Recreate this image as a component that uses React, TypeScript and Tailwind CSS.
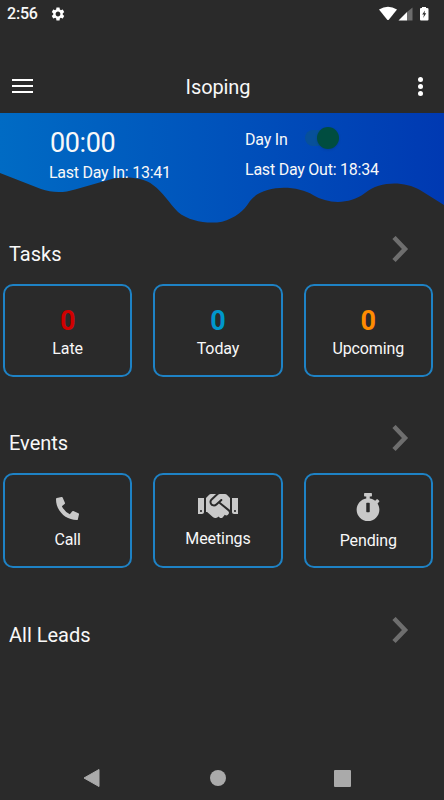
import { type ReactNode } from 'react';
import { MdSettings } from 'react-icons/md';
import { FaHandshake, FaPhoneAlt, FaStopwatch } from 'react-icons/fa';

const Wave = () => (
  <svg className="block h-[111px] w-[444px]" viewBox="0 0 444 111" aria-hidden="true">
    <defs>
      <linearGradient id="sea" x1="0" y1="0" x2="1" y2="0">
        <stop offset="0" stopColor="#006bc4" />
        <stop offset="1" stopColor="#0039b2" />
      </linearGradient>
    </defs>
    <path
      fill="url(#sea)"
      d="M0 0H444V92L420 77C404 68 380 68 365 80C349 92 328 91 313 82C297 72 263 71 250 88C244 98 235 105 222 108.700C209 111 190 109 178 99C169 90 163 79 153 72C143 64 123 63 110 66.500L75 76.500C64 80 52 80 41 76L0 60Z"
    />
  </svg>
);

const Chevron = () => (
  <svg className="h-[27px] w-[17px]" viewBox="0 0 17 27" aria-hidden="true">
    <path d="M2 1.500L13 13L2 24.500" fill="none" stroke="#6e6e6e" strokeWidth="4.500" />
  </svg>
);

const Heading = ({ title, className }: { title: string; className: string }) => (
  <div className={`flex h-[30px] justify-between pr-[35px] pl-[9px] ${className}`}>
    <h2 className="pt-[6px] text-[20px] leading-[25px]">{title}</h2>
    <Chevron />
  </div>
);

const Card = ({ children, label, className }: { children: ReactNode; label: string; className: string }) => (
  <div className={`flex flex-1 flex-col items-center rounded-[10px] border-2 border-[#1e82c5] ${className}`}>
    {children}
    <span className="text-[16px] leading-[20px] tracking-[-0.1px]">{label}</span>
  </div>
);

const Count = ({ color }: { color: string }) => (
  <span className={`mt-[20px] mb-[3px] text-[27px] leading-[30px] font-bold ${color}`}>0</span>
);

export default function App() {
  return (
    <div className="flex h-[800px] w-[444px] flex-col overflow-hidden bg-[#2a2a2a] font-['Roboto',sans-serif] text-[#f8f8f8]">
      <div className="flex h-[28px] items-center justify-between pr-[15px] pl-[7px]">
        <div className="flex items-center gap-[12px]">
          <span className="text-[16px] leading-[20px] font-medium tracking-[-0.2px]">2:56</span>
          <MdSettings size={16} color="#fff" />
        </div>
        <svg className="h-[16px] w-[50px]" viewBox="0 0 50 16" aria-hidden="true">
          <path fill="#fff" d="M0 3.500Q9 -2 18 3.500L10 13.500Q9 14.500 8 13.500Z" />
          <path fill="#fff" d="M19.500 14.500L28 6V14.500Z" />
          <path fill="#6c6c6c" d="M28 6L33.500 1.500V14.500H28Z" />
          <path fill="#fff" d="M41 3Q41 2 42 2H43V1H47V2H48Q49.500 2 49.500 3V13.500Q49.500 14.500 48.500 14.500H42Q41 14.500 41 13.500Z" />
          <path fill="#2a2a2a" d="M46 4.500L43.200 8.500H45L44.200 12L47.200 7.300H45.500Z" />
        </svg>
      </div>
      <header className="mt-[32px] grid h-[53px] grid-cols-3 items-center pr-[21px] pl-[12px]">
        <div className="flex w-[21px] flex-col gap-[4px] pb-[2px]">
          <span className="h-[2px] bg-white" />
          <span className="h-[2px] bg-white" />
          <span className="h-[2px] bg-white" />
        </div>
        <h1 className="pl-[1px] text-center text-[20px] leading-[24px] tracking-[-0.1px]">Isoping</h1>
        <div className="flex flex-col items-end gap-[2px] pb-px">
          <span className="size-[5px] rounded-full bg-white" />
          <span className="size-[5px] rounded-full bg-white" />
          <span className="size-[5px] rounded-full bg-white" />
        </div>
      </header>
      <section className="grid h-[111px] shrink-0">
        <div className="col-start-1 row-start-1">
          <Wave />
        </div>
        <div className="col-start-1 row-start-1 grid grid-cols-[196px_1fr] pl-[49px]">
          <div className="pt-[13px]">
            <div className="pl-[1px] text-[27px] leading-[34px] tracking-[-0.4px]">00:00</div>
            <div className="mt-[3px] text-[16px] leading-[20px] tracking-[-0.25px]">Last Day In: 13:41</div>
          </div>
          <div className="pt-[14px]">
            <div className="flex h-[24px] text-[16px]">
              <span className="w-[60px] pt-[3px] leading-[20px] tracking-[-0.2px]">Day In</span>
              <div className="mt-[3px] flex h-[16px] w-[34px] items-center justify-end rounded-full bg-[#07509a]">
                <span className="size-[22px] shrink-0 rounded-full bg-[#004d40] shadow-sm" />
              </div>
            </div>
            <div className="mt-[9px] text-[16px] leading-[20px] tracking-[-0.23px]">Last Day Out: 18:34</div>
          </div>
        </div>
      </section>
      <Heading title="Tasks" className="mt-[12px]" />
      <div className="mt-[18px] flex h-[93px] gap-[21px] pr-[11px] pl-[3px]">
        <Card label="Late" className=""><Count color="text-[#d00000]" /></Card>
        <Card label="Today" className=""><Count color="text-[#0097cc]" /></Card>
        <Card label="Upcoming" className=""><Count color="text-[#ff8c00]" /></Card>
      </div>
      <Heading title="Events" className="mt-[48px]" />
      <div className="mt-[18px] flex h-[95px] gap-[21px] pr-[11px] pl-[3px]">
        <Card label="Call" className="pt-[22px]">
          <div className="flex h-[33px] items-start"><FaPhoneAlt size={23} color="#c9c9c9" /></div>
        </Card>
        <Card label="Meetings" className="pt-[15px]">
          <div className="flex h-[39px] items-start"><FaHandshake className="h-[32px] w-[40px]" color="#c9c9c9" /></div>
        </Card>
        <Card label="Pending" className="pt-[18px]">
          <div className="flex h-[38px] items-start"><FaStopwatch size={28} color="#c9c9c9" /></div>
        </Card>
      </div>
      <Heading title="All Leads" className="mt-[49px]" />
      <nav className="mt-auto flex h-[44px] items-center justify-between pr-[93px] pl-[83px]">
        <svg className="h-[20px] w-[18px]" viewBox="0 0 18 20" aria-hidden="true"><path d="M1 10L16 1.500V18.500Z" fill="#aaa" stroke="#aaa" strokeWidth="1" strokeLinejoin="round" /></svg>
        <span className="size-[16px] rounded-full bg-[#aaa]" />
        <span className="size-[17px] rounded-[1px] bg-[#aaa]" />
      </nav>
    </div>
  );
}
